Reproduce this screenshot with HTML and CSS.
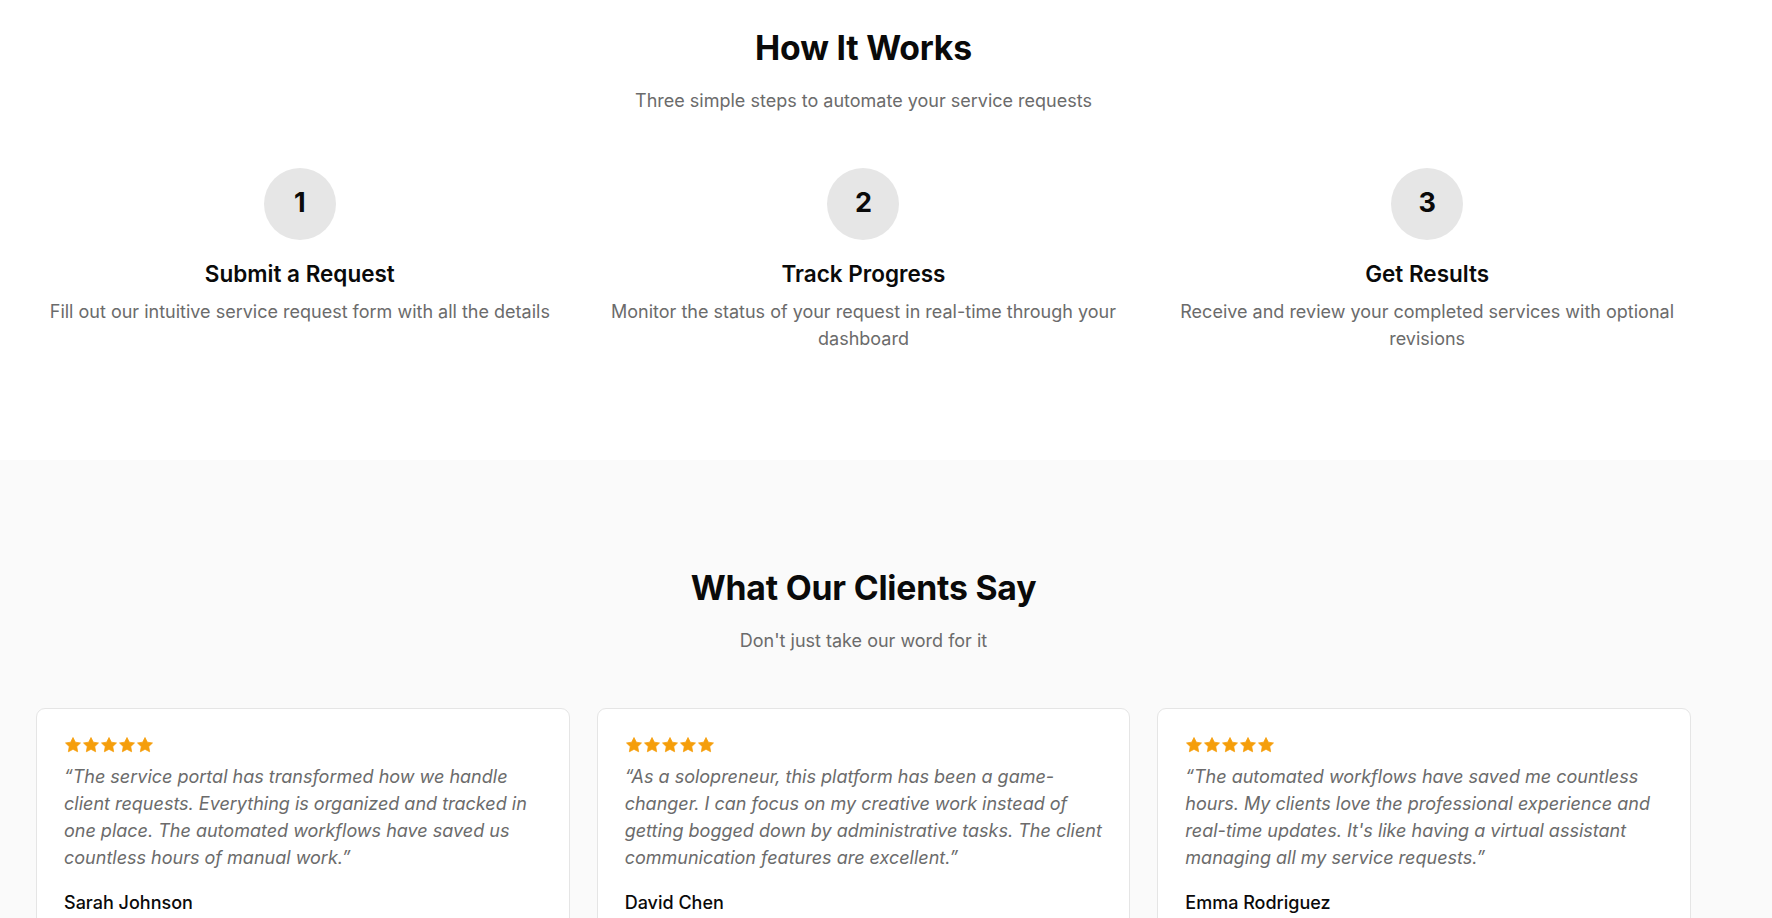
FILE: index.html
```html
<!DOCTYPE html>
<html lang="en">
<head>
<meta charset="utf-8">
<title>How It Works</title>
<link rel="stylesheet" href="styles.css">
</head>
<body>
<section class="section how">
  <div class="container">
    <h2 class="section-title">How It Works</h2>
    <p class="section-sub">Three simple steps to automate your service requests</p>
    <div class="steps">
      <div class="step">
        <div class="step-num">1</div>
        <h3 class="step-title">Submit a Request</h3>
        <p class="step-desc">Fill out our intuitive service request form with all the details</p>
      </div>
      <div class="step">
        <div class="step-num">2</div>
        <h3 class="step-title">Track Progress</h3>
        <p class="step-desc">Monitor the status of your request in real-time through your dashboard</p>
      </div>
      <div class="step">
        <div class="step-num">3</div>
        <h3 class="step-title">Get Results</h3>
        <p class="step-desc">Receive and review your completed services with optional revisions</p>
      </div>
    </div>
  </div>
</section>
<section class="section clients">
  <div class="container">
    <h2 class="section-title">What Our Clients Say</h2>
    <p class="section-sub">Don't just take our word for it</p>
    <div class="cards">
      <div class="card">
        <div class="stars">
          <svg viewBox="0 0 24 24"><path d="M12 2l3.09 6.26L22 9.27l-5 4.87 1.18 6.88L12 17.77l-6.18 3.25L7 14.14 2 9.27l6.91-1.01L12 2z"/></svg>
          <svg viewBox="0 0 24 24"><path d="M12 2l3.09 6.26L22 9.27l-5 4.87 1.18 6.88L12 17.77l-6.18 3.25L7 14.14 2 9.27l6.91-1.01L12 2z"/></svg>
          <svg viewBox="0 0 24 24"><path d="M12 2l3.09 6.26L22 9.27l-5 4.87 1.18 6.88L12 17.77l-6.18 3.25L7 14.14 2 9.27l6.91-1.01L12 2z"/></svg>
          <svg viewBox="0 0 24 24"><path d="M12 2l3.09 6.26L22 9.27l-5 4.87 1.18 6.88L12 17.77l-6.18 3.25L7 14.14 2 9.27l6.91-1.01L12 2z"/></svg>
          <svg viewBox="0 0 24 24"><path d="M12 2l3.09 6.26L22 9.27l-5 4.87 1.18 6.88L12 17.77l-6.18 3.25L7 14.14 2 9.27l6.91-1.01L12 2z"/></svg>
        </div>
        <p class="quote">&ldquo;The service portal has transformed how we handle client requests. Everything is organized and tracked in one place. The automated workflows have saved us countless hours of manual work.&rdquo;</p>
        <p class="name">Sarah Johnson</p>
      </div>
      <div class="card">
        <div class="stars">
          <svg viewBox="0 0 24 24"><path d="M12 2l3.09 6.26L22 9.27l-5 4.87 1.18 6.88L12 17.77l-6.18 3.25L7 14.14 2 9.27l6.91-1.01L12 2z"/></svg>
          <svg viewBox="0 0 24 24"><path d="M12 2l3.09 6.26L22 9.27l-5 4.87 1.18 6.88L12 17.77l-6.18 3.25L7 14.14 2 9.27l6.91-1.01L12 2z"/></svg>
          <svg viewBox="0 0 24 24"><path d="M12 2l3.09 6.26L22 9.27l-5 4.87 1.18 6.88L12 17.77l-6.18 3.25L7 14.14 2 9.27l6.91-1.01L12 2z"/></svg>
          <svg viewBox="0 0 24 24"><path d="M12 2l3.09 6.26L22 9.27l-5 4.87 1.18 6.88L12 17.77l-6.18 3.25L7 14.14 2 9.27l6.91-1.01L12 2z"/></svg>
          <svg viewBox="0 0 24 24"><path d="M12 2l3.09 6.26L22 9.27l-5 4.87 1.18 6.88L12 17.77l-6.18 3.25L7 14.14 2 9.27l6.91-1.01L12 2z"/></svg>
        </div>
        <p class="quote">&ldquo;As a solopreneur, this platform has been a game-changer. I can focus on my creative work instead of getting bogged down by administrative tasks. The client communication features are excellent.&rdquo;</p>
        <p class="name">David Chen</p>
      </div>
      <div class="card">
        <div class="stars">
          <svg viewBox="0 0 24 24"><path d="M12 2l3.09 6.26L22 9.27l-5 4.87 1.18 6.88L12 17.77l-6.18 3.25L7 14.14 2 9.27l6.91-1.01L12 2z"/></svg>
          <svg viewBox="0 0 24 24"><path d="M12 2l3.09 6.26L22 9.27l-5 4.87 1.18 6.88L12 17.77l-6.18 3.25L7 14.14 2 9.27l6.91-1.01L12 2z"/></svg>
          <svg viewBox="0 0 24 24"><path d="M12 2l3.09 6.26L22 9.27l-5 4.87 1.18 6.88L12 17.77l-6.18 3.25L7 14.14 2 9.27l6.91-1.01L12 2z"/></svg>
          <svg viewBox="0 0 24 24"><path d="M12 2l3.09 6.26L22 9.27l-5 4.87 1.18 6.88L12 17.77l-6.18 3.25L7 14.14 2 9.27l6.91-1.01L12 2z"/></svg>
          <svg viewBox="0 0 24 24"><path d="M12 2l3.09 6.26L22 9.27l-5 4.87 1.18 6.88L12 17.77l-6.18 3.25L7 14.14 2 9.27l6.91-1.01L12 2z"/></svg>
        </div>
        <p class="quote">&ldquo;The automated workflows have saved me countless hours. My clients love the professional experience and real-time updates. It's like having a virtual assistant managing all my service requests.&rdquo;</p>
        <p class="name">Emma Rodriguez</p>
      </div>
    </div>
  </div>
</section>
</body>
</html>
```
FILE: styles.css
```css
* { box-sizing: border-box; }
html, body { margin: 0; padding: 0; }
body {
  font-family: Inter, "Noto Sans", "Liberation Sans", sans-serif;
  color: #0a0a0a;
  background: #ffffff;
  font-size: 18px;
  line-height: 1.5;
}
h2, h3, p { margin: 0; }

.container {
  max-width: 1727px;
  padding: 0 36px;
}

.section { padding: 108px 0; }
.how { padding-top: 28px; background: #ffffff; }
.clients { background: #fafafa; }

.section-title {
  font-size: 33.75px;
  line-height: 40.5px;
  font-weight: 700;
  text-align: center;
  letter-spacing: -0.2px;
  margin-bottom: 18px;
}
.section-sub {
  font-size: 18px;
  line-height: 27px;
  color: #6b6b6b;
  text-align: center;
  margin-bottom: 54px;
}

.steps {
  display: grid;
  grid-template-columns: repeat(3, 1fr);
  gap: 36px;
}
.step {
  display: flex;
  flex-direction: column;
  align-items: center;
  text-align: center;
}
.step-num {
  width: 72px;
  height: 72px;
  border-radius: 50%;
  background: #e6e6e6;
  display: flex;
  align-items: center;
  justify-content: center;
  font-size: 27px;
  font-weight: 700;
  margin-bottom: 18px;
}
.step-title {
  font-size: 22.5px;
  line-height: 31.5px;
  font-weight: 600;
  margin-bottom: 9px;
}
.step-desc {
  font-size: 18px;
  line-height: 27px;
  color: #6b6b6b;
}

.cards {
  display: grid;
  grid-template-columns: repeat(3, 1fr);
  gap: 27px;
}
.card {
  background: #ffffff;
  border: 1px solid #e5e5e5;
  border-radius: 9px;
  padding: 27px;
}
.stars {
  display: flex;
  height: 18px;
  margin-bottom: 9px;
}
.stars svg {
  width: 18px;
  height: 18px;
  fill: #f59e0b;
  stroke: #f59e0b;
  stroke-width: 1;
  stroke-linejoin: round;
}
.quote {
  font-size: 18px;
  line-height: 27px;
  font-style: italic;
  color: #6b6b6b;
  margin-bottom: 18px;
}
.name {
  font-size: 18px;
  line-height: 27px;
  font-weight: 500;
  color: #0a0a0a;
}
```
